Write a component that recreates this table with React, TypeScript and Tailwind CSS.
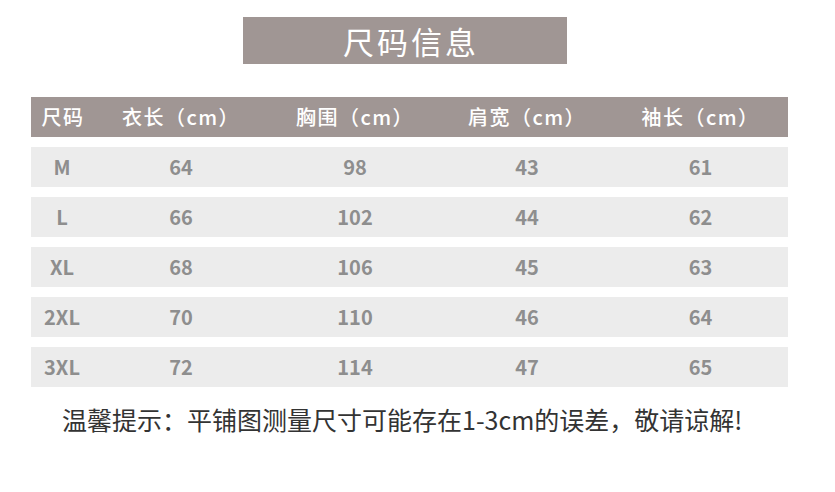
import React from "react";

const rows = [
  ["M", "64", "98", "43", "61"],
  ["L", "66", "102", "44", "62"],
  ["XL", "68", "106", "45", "63"],
  ["2XL", "70", "110", "46", "64"],
  ["3XL", "72", "114", "47", "65"],
];

const headers = ["尺码", "衣长（cm）", "胸围（cm）", "肩宽（cm）", "袖长（cm）"];

const font = { fontFamily: '"Noto Sans CJK SC", "Noto Sans", sans-serif' };

export default function App() {
  return (
    <div className="w-[835px] h-[492px] bg-white overflow-hidden" style={font}>
      <div className="pt-[17px] pl-[243px]">
        <div className="w-[324px] h-[47px] bg-[#a09694] flex items-center justify-center pl-[12px]">
          <span className="text-[31px] leading-none text-white tracking-[3px]">尺码信息</span>
        </div>
      </div>
      <div className="mt-[33px] ml-[31px] w-[757px] flex flex-col gap-[10px]">
        <div className="h-[40px] bg-[#a09694] grid grid-cols-[62px_176px_172px_172px_175px] items-center text-white text-[20px] font-medium tracking-[1.5px]">
          {headers.map((h, i) => (
            <div key={i} className={i === 0 ? "text-center pl-[2px]" : "text-center pl-[0px]"}>
              {h}
            </div>
          ))}
        </div>
        {rows.map((r, ri) => (
          <div
            key={ri}
            className="h-[40px] bg-[#ececec] grid grid-cols-[62px_176px_172px_172px_175px] items-center text-[#8e8e8e] text-[20px] font-semibold"
          >
            {r.map((c, ci) => (
              <div key={ci} className="text-center">
                {c}
              </div>
            ))}
          </div>
        ))}
      </div>
      <div className="mt-[20px] ml-[62px] text-[25px] leading-none text-[#333333] whitespace-nowrap">
        温馨提示：平铺图测量尺寸可能存在1-3cm的误差，敬请谅解!
      </div>
    </div>
  );
}
